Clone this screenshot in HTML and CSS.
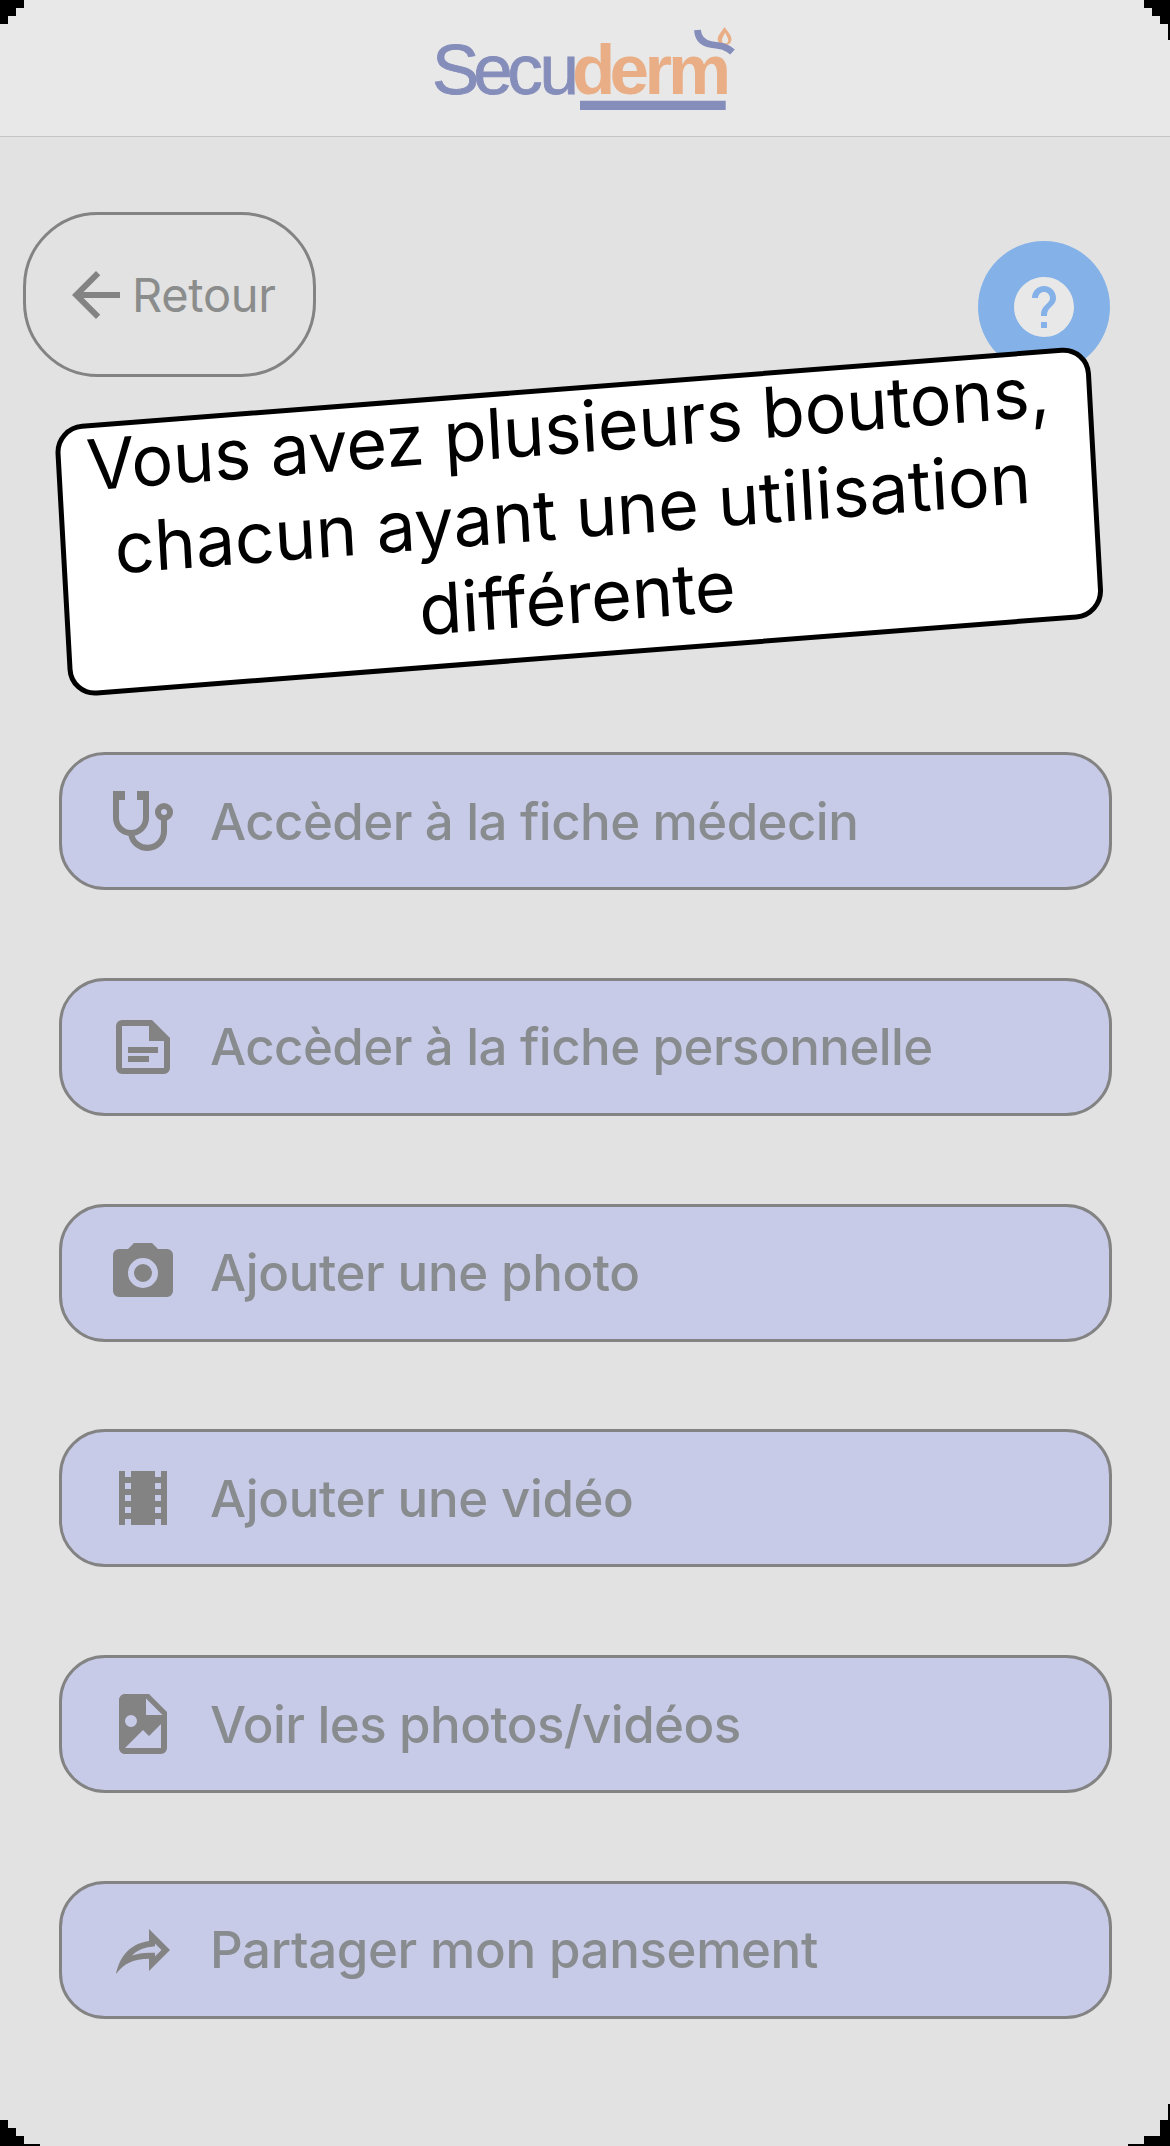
FILE: index.html
```html
<!DOCTYPE html>
<html lang="fr">
<head>
<meta charset="utf-8">
<title>Secuderm</title>
<link rel="stylesheet" href="styles.css">
</head>
<body>
<header class="topbar">
  <svg class="logo" viewBox="0 0 310 100" role="img" aria-label="Secuderm">
    <text class="logo-light" x="2 43.3 77.2 109.5" y="73.500">Secu</text>
    <text class="logo-bold" x="142 179.5 214.5 238" y="73.500">derm</text>
    <path class="logo-bar" d="M150 80.700h145.700v9.300H150z"/>
    <path class="logo-flame" fill-rule="evenodd" d="M294.500 7C298 12 301.500 15 301.500 19.500a6.900 6 0 0 1-13.800 0C287.700 15 291.500 12 294.500 7zM295.200 12.500C293.500 16 291.800 18 292 20.500a3.100 3 0 0 0 6.200 0C298.500 18 296.500 16 295.200 12.500z"/>
    <path class="logo-wave" d="M267.500 10C268 18 272 23 281 24.500C291 26 296 26 302.500 32"/>
  </svg>
</header>
<main class="screen">
  <div class="toolbar">
    <button class="back">
      <svg class="icon" viewBox="0 0 24 24"><path d="M20 11H7.830l5.590-5.590L12 4l-8 8 8 8 1.410-1.410L7.830 13H20z"/></svg>
      <span>Retour</span>
    </button>
    <button class="help" aria-label="Aide">
      <svg class="icon" viewBox="0 0 24 24"><path d="M12 2C6.480 2 2 6.480 2 12s4.480 10 10 10 10-4.480 10-10S17.520 2 12 2zm1 17h-2v-2h2v2zm2.070-7.750l-.9.920C13.450 12.900 13 13.500 13 15h-2v-.5c0-1.100.45-2.100 1.170-2.830l1.240-1.260c.37-.36.59-.86.59-1.410 0-1.100-.9-2-2-2s-2 .9-2 2H8c0-2.210 1.790-4 4-4s4 1.790 4 4c0 .88-.36 1.680-.93 2.250z"/></svg>
    </button>
    <div class="tooltip">
      <p>Vous avez plusieurs boutons,<br>chacun ayant une utilisation<br>différente</p>
    </div>
  </div>
  <nav class="actions">
    <button class="action">
      <svg class="icon" viewBox="0 0 24 24"><path d="M19,8C19.560,8 20,8.430 20,9A1,1 0 0,1 19,10C18.430,10 18,9.550 18,9C18,8.430 18.430,8 19,8M2,2V11C2,13.960 4.190,16.500 7.140,16.910C7.760,19.920 10.420,22 13.500,22A6.500,6.500 0 0,0 20,15.500V11.810C21.160,11.390 22,10.290 22,9A3,3 0 0,0 19,6A3,3 0 0,0 16,9C16,10.290 16.840,11.400 18,11.810V15.410C18,17.910 16,19.910 13.500,19.910C11.500,19.910 9.820,18.700 9.220,16.900C12,16.300 14,13.800 14,11V2H10V5H12V11A4,4 0 0,1 8,15A4,4 0 0,1 4,11V5H6V2H2Z"/></svg>
      <span class="tight">Accèder à la fiche médecin</span>
    </button>
    <button class="action">
      <svg class="icon" viewBox="0 0 24 24"><path fill-rule="evenodd" d="M5 3H15L21 9V19A2 2 0 0 1 19 21H5A2 2 0 0 1 3 19V5A2 2 0 0 1 5 3ZM5 5V19H19V10H14V5ZM7 12H17V14H7ZM7 15H14V17H7Z"/></svg>
      <span class="tight">Accèder à la fiche personnelle</span>
    </button>
    <button class="action">
      <svg class="icon" viewBox="0 0 24 24"><path d="M4,4H7L9,2H15L17,4H20A2,2 0 0,1 22,6V18A2,2 0 0,1 20,20H4A2,2 0 0,1 2,18V6A2,2 0 0,1 4,4M12,7A5,5 0 0,0 7,12A5,5 0 0,0 12,17A5,5 0 0,0 17,12A5,5 0 0,0 12,7M12,9A3,3 0 0,1 15,12A3,3 0 0,1 12,15A3,3 0 0,1 9,12A3,3 0 0,1 12,9Z"/></svg>
      <span>Ajouter une photo</span>
    </button>
    <button class="action">
      <svg class="icon" viewBox="0 0 24 24"><path d="M18 3v2h-2V3H8v2H6V3H4v18h2v-2h2v2h8v-2h2v2h2V3h-2zM8 17H6v-2h2v2zm0-4H6v-2h2v2zm0-4H6V7h2v2zm10 8h-2v-2h2v2zm0-4h-2v-2h2v2zm0-4h-2V7h2v2z"/></svg>
      <span>Ajouter une vidéo</span>
    </button>
    <button class="action">
      <svg class="icon" viewBox="0 0 24 24"><path d="M13,9H18.500L13,3.500V9M6,2H14L20,8V20A2,2 0 0,1 18,22H6C4.890,22 4,21.100 4,20V4C4,2.890 4.890,2 6,2M6,20H18V12L14,16L12,14L6,20M8,9A2,2 0 0,0 6,11A2,2 0 0,0 8,13A2,2 0 0,0 10,11A2,2 0 0,0 8,9Z"/></svg>
      <span class="tight">Voir les photos/vidéos</span>
    </button>
    <button class="action">
      <svg class="icon" viewBox="0 0 24 24"><path d="M14,5V9C7,10 4,15 3,20C5.500,16.500 9,14.900 14,14.900V19L21,12L14,5M16,9.830L18.170,12L16,14.170V12.900H14C11.930,12.900 10.070,13.280 8.340,13.850C9.740,12.460 11.540,11.370 14.280,11L16,10.730V9.830Z"/></svg>
      <span>Partager mon pansement</span>
    </button>
  </nav>
</main>
<svg class="bezel" viewBox="0 0 1170 2146" aria-hidden="true">
  <path d="M0 0H24V8H16V16H8V24H0ZM1170 0H1144V8H1152V16H1160V24H1168V40H1170ZM0 2120H8V2128H16V2136H24V2144H40V2146H0ZM1170 2104H1168V2120H1160V2136H1144V2144H1128V2146H1170Z"/>
</svg>
</body>
</html>
```
FILE: styles.css
```css
* {
  box-sizing: border-box;
}

body {
  margin: 0;
  width: 1170px;
  height: 2146px;
  overflow: hidden;
  position: relative;
  background: #e2e2e2;
  font-family: Inter, "Liberation Sans", sans-serif;
}

button {
  margin: 0;
  font: inherit;
  cursor: pointer;
}

.topbar {
  display: flex;
  justify-content: center;
  height: 137px;
  padding-top: 20px;
  background: #e8e8e8;
  border-bottom: 1px solid #c4c4c4;
}

.logo {
  width: 310px;
  height: 100px;
}

.logo text {
  font-family: "Liberation Sans", Arial, sans-serif;
  font-size: 71px;
}

.logo .logo-light {
  fill: #858dba;
  stroke: #858dba;
  stroke-width: 0.8px;
}

.logo .logo-bold {
  fill: #e9ae85;
  font-weight: 700;
}

.logo-bar {
  fill: #858dba;
}

.logo-flame {
  fill: #e9ae85;
}

.logo-wave {
  fill: none;
  stroke: #858dba;
  stroke-width: 6.8px;
}

.icon {
  width: 72px;
  height: 72px;
  flex: none;
  fill: currentColor;
}

.toolbar {
  position: relative;
  display: flex;
  justify-content: space-between;
  align-items: flex-start;
  height: 615px;
  padding: 75px 60px 0 23px;
}

.back {
  display: flex;
  align-items: center;
  width: 293px;
  height: 165px;
  padding: 0 0 0 34px;
  border: 3px solid #838383;
  border-radius: 75px;
  background: none;
  color: #838383;
}

.back span {
  color: #8b8c8c;
  font-size: 47px;
  letter-spacing: -0.3px;
}

.help {
  display: flex;
  align-items: center;
  justify-content: center;
  width: 132px;
  height: 132px;
  margin-top: 29px;
  padding: 0;
  border: 0;
  border-radius: 50%;
  background: #83b1e8;
  color: #e8e8e8;
}

/* Tilted coach mark laid over the toolbar */
.tooltip {
  position: absolute;
  left: 53.6px;
  top: 288.5px;
  width: 1037.5px;
  height: 272px;
  border: 5px solid #000;
  border-radius: 28px;
  background: #fff;
  color: #000;
  transform: matrix(0.9975, -0.0774, 0.0555, 0.9985, 0, 0);
  transform-origin: 0 0;
}

.tooltip p {
  margin: -6px 0 0 -12px;
  font-size: 70px;
  line-height: 85px;
  letter-spacing: -0.12px;
  text-align: center;
  white-space: nowrap;
}

.actions {
  display: flex;
  flex-direction: column;
  gap: 87.8px;
  padding: 0 58px 0 59px;
}

.action {
  display: flex;
  align-items: center;
  gap: 31px;
  height: 138px;
  padding: 0 0 0 45px;
  border: 3px solid #838383;
  border-radius: 46px;
  background: #c8cbe8;
  color: #838383;
}

.action span {
  color: #888c8e;
  font-size: 51px;
  font-weight: 500;
  letter-spacing: -0.38px;
  white-space: nowrap;
}

.action .tight {
  letter-spacing: -0.57px;
}

.bezel {
  position: absolute;
  inset: 0;
  width: 1170px;
  height: 2146px;
  fill: #000;
  pointer-events: none;
}
```
